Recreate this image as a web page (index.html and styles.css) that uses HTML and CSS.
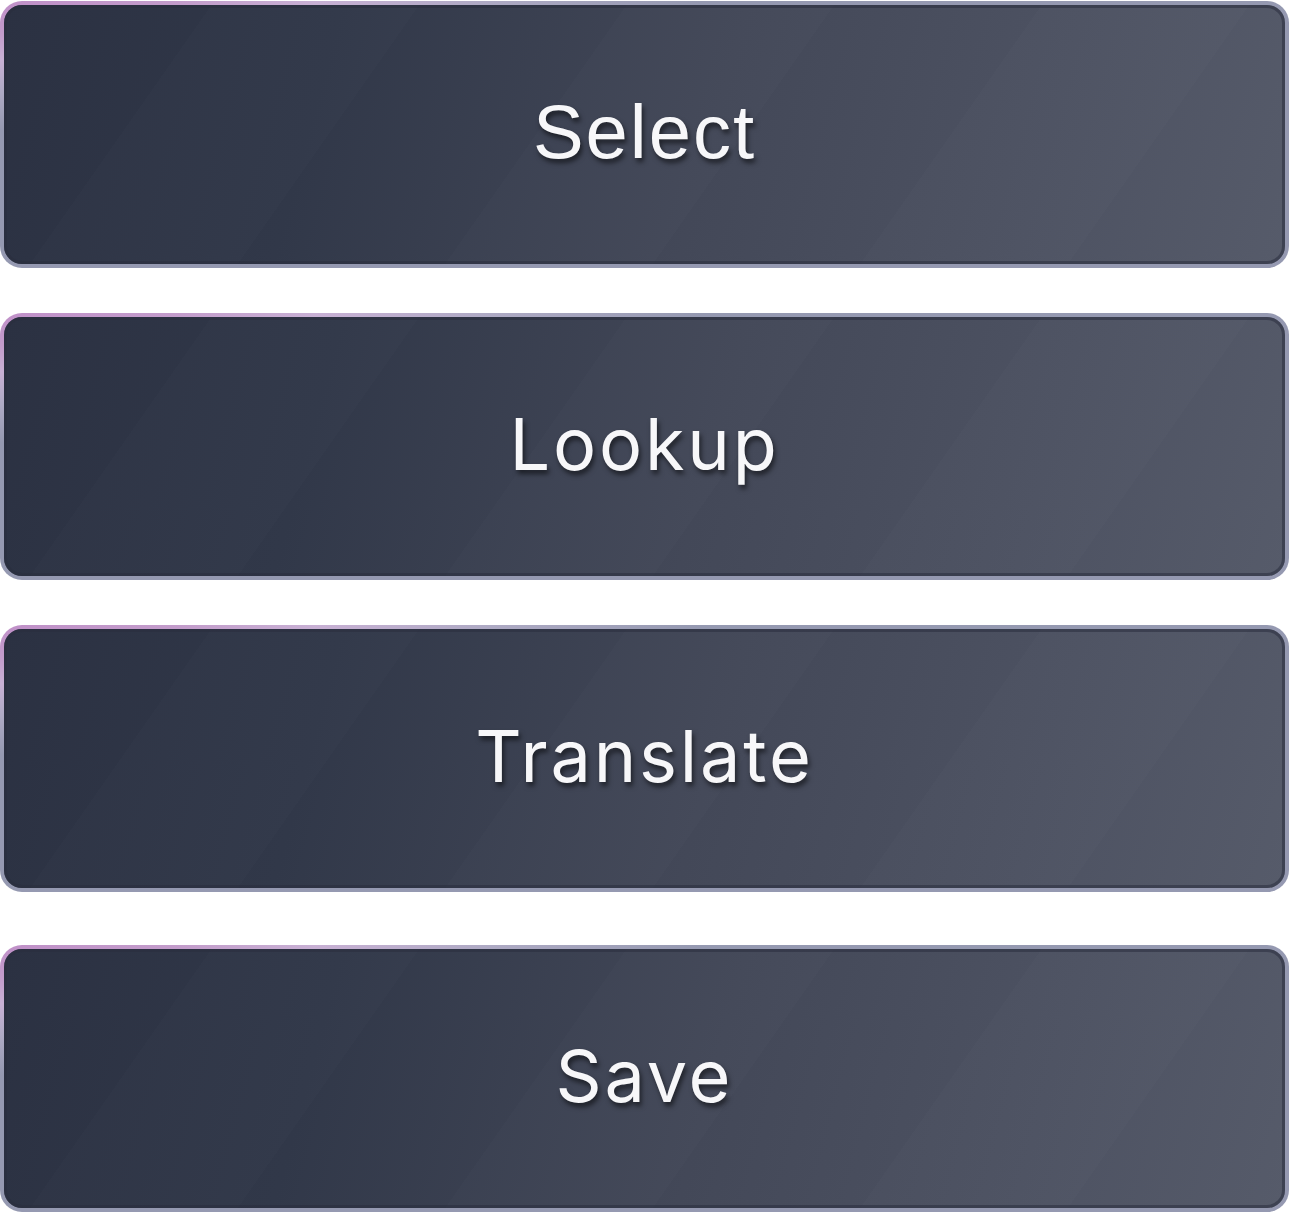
FILE: index.html
```html
<!DOCTYPE html>
<html lang="en">
<head>
<meta charset="utf-8">
<title>Actions</title>
<link rel="stylesheet" href="styles.css">
</head>
<body>
<div class="stack">
  <button class="btn"><span class="label label-arial">Select</span></button>
  <button class="btn"><span class="label">Lookup</span></button>
  <button class="btn"><span class="label">Translate</span></button>
  <button class="btn btn-last"><span class="label">Save</span></button>
</div>
</body>
</html>
```
FILE: styles.css
```css
html, body {
  margin: 0;
  padding: 0;
  background: #ffffff;
}
.stack {
  display: flex;
  flex-direction: column;
  gap: 45px;
  padding-top: 1px;
}
.btn {
  display: flex;
  align-items: center;
  justify-content: center;
  width: 1289px;
  height: 267px;
  box-sizing: border-box;
  border: 4px solid transparent;
  border-radius: 22px;
  padding: 0;
  cursor: pointer;
  background:
    repeating-linear-gradient(125deg, rgba(255,255,255,0) 0 170px, rgba(255,255,255,0.012) 170px 340px) padding-box,
    linear-gradient(105deg, #2b3142 0%, #313849 25%, #434858 55%, #4d5262 80%, #565b6a 100%) padding-box,
    radial-gradient(700px 130px at 0 0, #c090c8 0%, #c39ccb 25%, #c8b0d4 45%, #aeaac4 70%, #9599b1 100%) border-box;
  box-shadow: inset 0 0 0 3px rgba(42, 46, 62, 0.55);
}
.btn-last {
  margin-top: 8px;
}
.label {
  font-family: "Inter", "Noto Sans", sans-serif;
  font-size: 72px;
  font-weight: 400;
  color: #f7f7f9;
  letter-spacing: 2.8px;
  text-shadow: 2px 4px 5px rgba(0, 0, 0, 0.55);
  margin-top: -6px;
}
.label-arial {
  font-family: "Liberation Sans", Arial, sans-serif;
  font-size: 76px;
  letter-spacing: 2px;
}
```
